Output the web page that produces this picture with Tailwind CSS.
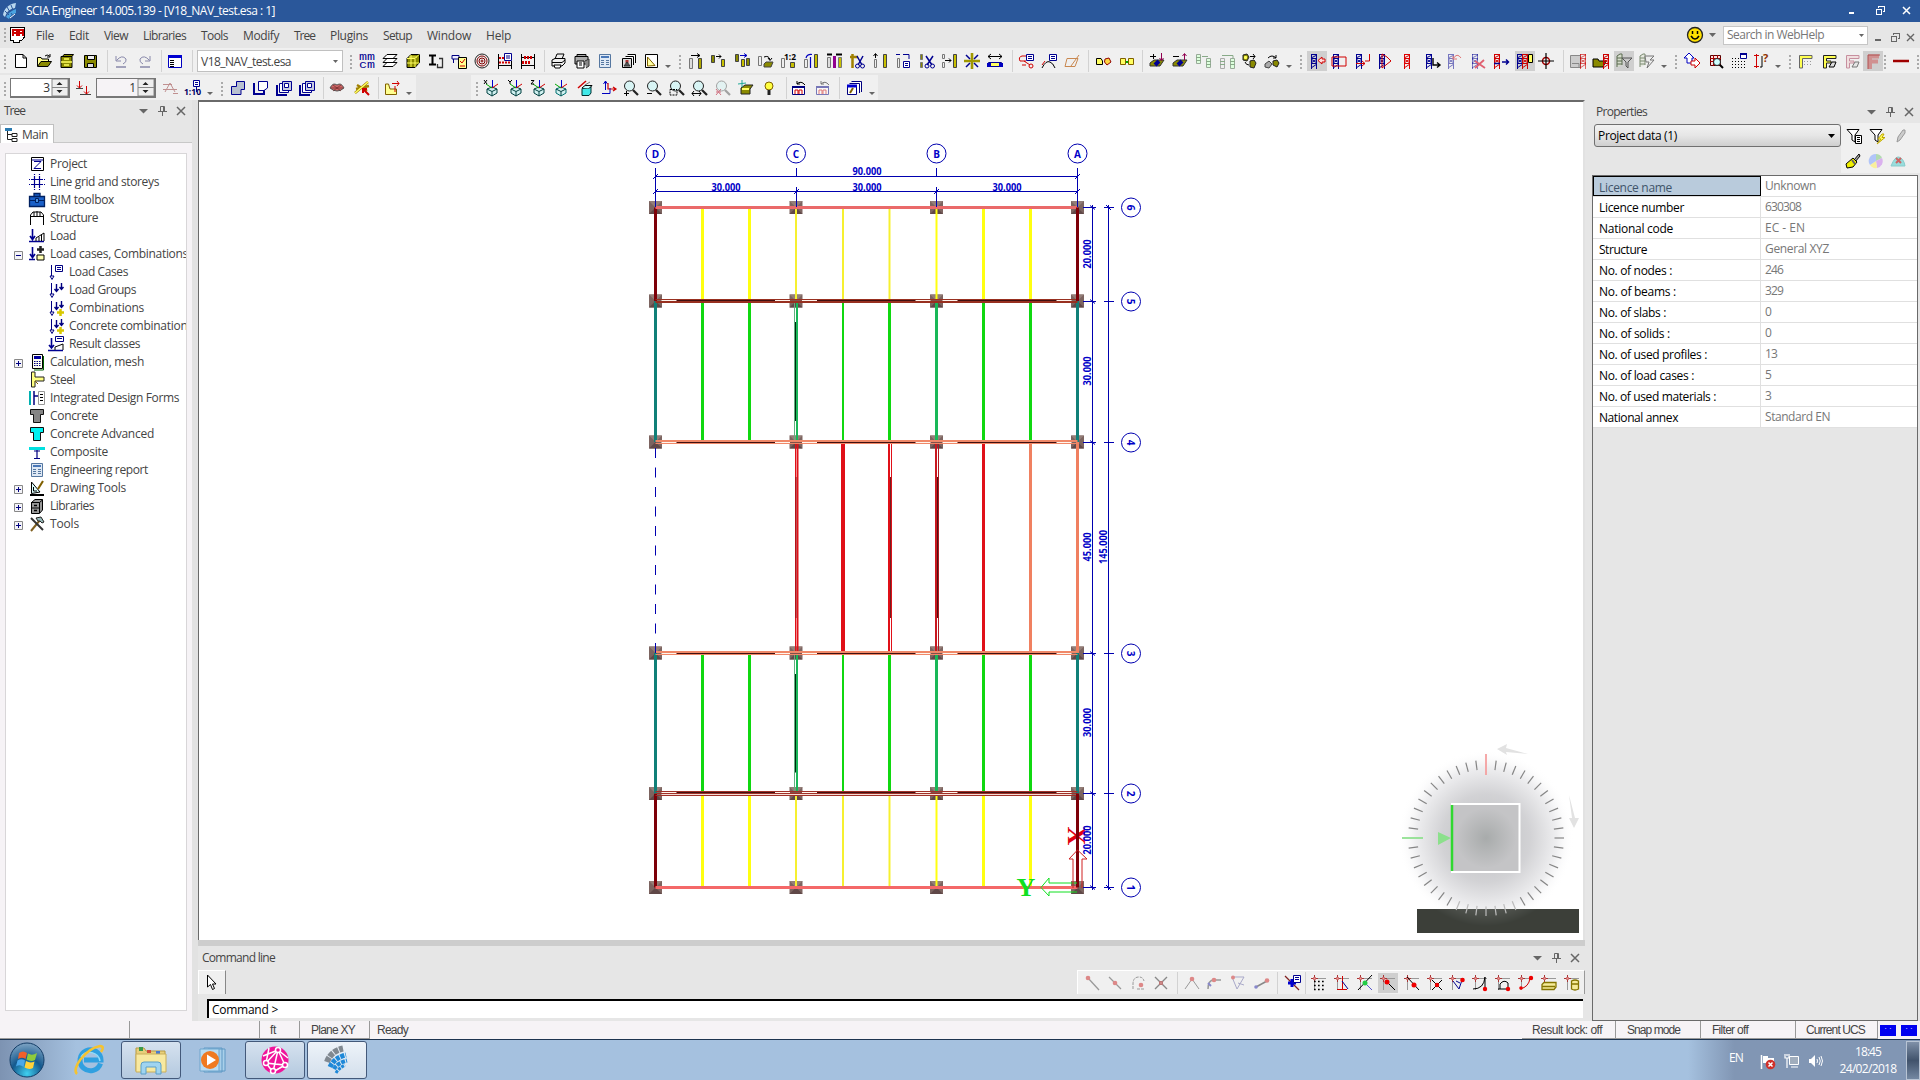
<!DOCTYPE html>
<html lang="en">
<head>
<meta charset="utf-8">
<title>SCIA Engineer</title>
<script src="https://cdn.jsdelivr.net/npm/@tailwindcss/browser@4"></script>
</head>
<body class="w-[1920px] h-[1080px] overflow-hidden bg-[#e6e6e6] font-['Open_Sans','Noto_Sans',sans-serif] text-[12px] leading-[18px] text-[#444] flex flex-col whitespace-nowrap">

<!-- Title bar -->
<header class="h-[22px] shrink-0 bg-[#2a579a] text-white flex items-center pl-[3px] pr-[9px]">
  <svg class="w-[14px] h-[16px] mr-[9px]" viewBox="0 0 14 16"><path d="M0 12C1 6 5 1 13 0L12 5C7 6 4 8 2 14Z" fill="#b9d7ee"/><path d="M3 14C5 10 8 8 13 6V10C9 11 7 13 6 16Z" fill="#4aa3e0"/><path d="M4 4L7 9M8 2L10 7M2 8L6 12M8 10L10 13" stroke="#2a579a"/><path d="M7 15L12 11" stroke="#fff"/></svg>
  <span data-w="249">SCIA Engineer 14.005.139 - [V18_NAV_test.esa : 1]</span>
  <svg class="ml-auto w-[66px] h-[14px]" viewBox="0 0 66 14" fill="none" stroke="#fff" shape-rendering="crispEdges"><path d="M4 9H9" stroke-width="2"/><path d="M33.500 4V2.500H39.500V7.500H38M31.500 5.500H36.500V10.500H31.500Z" stroke-width="1.500"/><path d="M58 3L65 10M65 3L58 10" stroke-width="1.500" shape-rendering="auto"/></svg>
</header>

<!-- Menu -->
<nav class="h-[26px] shrink-0 flex items-center pl-[3px] pr-[4px]">
  <svg class="w-[5px] h-[18px]" viewBox="0 0 5 18"><path d="M2 2V18" stroke="#aaa" stroke-width="2" stroke-dasharray="2 2"/></svg>
  <svg class="w-[16px] h-[16px] ml-[2px] mr-[10px]" viewBox="0 0 16 16" shape-rendering="crispEdges"><path d="M.5.500H14.500V10L12 13H9V15H3V13H.5Z" fill="#fff" stroke="#000"/><path d="M3 9V3H7V9M9 9V3H13V9M3 6H13" fill="none" stroke="#c00" stroke-width="1.500"/></svg>
  <div class="flex gap-[15px] pt-[1px]" id="menu"></div>
  <svg class="ml-auto w-[18px] h-[18px]" viewBox="0 0 18 18"><circle cx="9" cy="9" r="7.500" fill="#ffe000" stroke="#222" stroke-width="1.300"/><path d="M5 10Q9 16 13 10M6.500 5V8M11.500 5V8" fill="none" stroke="#000" stroke-width="1.500"/></svg>
  <svg class="w-[7px] h-[4px] ml-[5px] mr-[7px]" viewBox="0 0 7 4"><path d="M0 0H7L3.500 4Z" fill="#666"/></svg>
  <div class="w-[145px] h-[19px] bg-white border border-[#c6c6c6] flex items-center px-[3px] text-[#777]"><span data-w="97">Search in WebHelp</span><svg class="ml-auto w-[5px] h-[3px]" viewBox="0 0 5 3"><path d="M0 0H5L2.500 3Z" fill="#666"/></svg></div>
  <svg class="w-[44px] h-[14px] ml-[4px] mt-[6px]" viewBox="0 0 44 14" fill="none" stroke="#666" shape-rendering="crispEdges"><path d="M3 9H9" stroke-width="2"/><path d="M21.500 4V2.500H27.500V7.500H26M19.500 5.500H24.500V10.500H19.500Z"/><path d="M35 3L42 10M42 3L35 10" stroke-width="1.400" shape-rendering="auto"/></svg>
</nav>

<!-- Toolbars -->
<div class="h-[25px] shrink-0 bg-[#f0f0f0] flex items-center" id="bar1"></div>
<div class="h-[27px] shrink-0 flex items-end gap-[55px]">
  <div class="h-[25px] w-[416px] bg-[#f0f0f0] flex items-center" id="bar2"></div>
  <div class="h-[25px] w-[407px] bg-[#f0f0f0] flex items-center" id="bar3"></div>
</div>

<!-- Work area -->
<main class="h-[921px] shrink-0 flex">
  <aside class="w-[192px] flex flex-col">
    <div class="h-[24px] flex items-center pl-[4px] pr-[5px] pb-[2px]"><span data-w="21">Tree</span>
      <svg class="ml-auto w-[48px] h-[12px]" viewBox="0 0 48 12"><path d="M0 4H9L4.500 8.500Z" fill="#666"/><path d="M21.500 6.500V1.500H25.500V6.500M19 6.500H28M23.500 6.500V11M24.500 1.500V6" fill="none" stroke="#666"/><path d="M38 2L46 10M46 2L38 10" stroke="#666" stroke-width="1.500"/></svg></div>
    <div class="h-[19px] flex border-b border-[#c8c8c8]"><div class="h-[19px] w-[54px] bg-white border border-b-0 border-[#c0c0c0] flex items-center pl-[4px] pt-[2px]"><svg class="w-[13px] h-[14px] mr-[4px]" viewBox="0 0 13 14"><path d="M0 0H7V3H0Z" fill="#2a7ab0"/><path d="M2.500 3V11.500H7M2.500 6.500H7M7 5.500H12V8.500H7ZM7 10.500H12V13.500H7Z" fill="none" stroke="#222"/></svg><span data-w="26">Main</span></div></div>
    <div class="grow bg-[#f6f3f6] px-[5px] pt-[10px] pb-[10px]"><div class="h-[858px] w-[182px] bg-white border border-[#d8d6d8] overflow-hidden pt-[1px]" id="tree"></div></div>
  </aside>
  <div class="w-[6px] bg-[#e2e2e2]"></div>

  <section class="w-[1387px] flex flex-col">
    <div class="h-[840px] bg-white border-t-2 border-l border-[#6a6a6a] border-r-2 border-r-[#e2e2e2]">
      <svg class="w-[1384px] h-[838px] block" viewBox="199 102 1384 838" id="model"></svg>
    </div>
    <div class="h-[6px] bg-[#cdcdcd]"></div>
    <div class="h-[23px] flex items-center pl-[4px] pr-[4px]"><span data-w="73">Command line</span>
      <svg class="ml-auto w-[48px] h-[12px]" viewBox="0 0 48 12"><path d="M0 4H9L4.500 8.500Z" fill="#666"/><path d="M21.500 6.500V1.500H25.500V6.500M19 6.500H28M23.500 6.500V11M24.500 1.500V6" fill="none" stroke="#666"/><path d="M38 2L46 10M46 2L38 10" stroke="#666" stroke-width="1.500"/></svg></div>
    <div class="h-[25px] flex items-end justify-between">
      <div class="w-[28px] h-[24px] bg-[#f0f0f0] border-t border-l border-t-white border-l-white border-r border-r-[#888] flex items-center justify-center"><svg class="w-[12px] h-[17px]" viewBox="0 0 12 17"><path d="M1.500 1V13L4.500 10.500L6.500 15.500L8.500 14.500L6.500 10H10Z" fill="#fff" stroke="#000"/></svg></div>
      <div class="w-[508px] h-[24px] bg-[#f0f0f0] border-t border-t-white border-l border-l-white border-r border-r-[#999] flex items-center" id="bar4"></div>
    </div>
    <div class="h-[27px] pl-[9px] pt-[5px] pr-[2px]"><div class="h-[19px] bg-white border-t-2 border-l-2 border-black text-black pl-[3px] leading-[17px] flex items-center"><span data-w="66">Command &gt;</span></div></div>
  </section>

  <aside class="w-[335px] pl-[7px] flex flex-col">
    <div class="h-[23px] flex items-center pl-[4px] pr-[5px]"><span data-w="51">Properties</span>
      <svg class="ml-auto w-[48px] h-[12px]" viewBox="0 0 48 12"><path d="M0 4H9L4.500 8.500Z" fill="#666"/><path d="M21.500 6.500V1.500H25.500V6.500M19 6.500H28M23.500 6.500V11M24.500 1.500V6" fill="none" stroke="#666"/><path d="M38 2L46 10M46 2L38 10" stroke="#666" stroke-width="1.500"/></svg></div>
    <div class="h-[52px] flex">
      <div class="w-[247px] h-[23px] ml-[2px] mt-px rounded-[3px] border border-[#707070] bg-linear-to-b from-[#f2f2f2] via-[#e6e6e6] to-[#cfcfcf] text-black flex items-center pl-[3px] pr-[5px]"><span data-w="79">Project data (1)</span><svg class="ml-auto w-[7px] h-[4px]" viewBox="0 0 7 4"><path d="M0 0H7L3.500 4Z"/></svg></div>
      <div class="w-[79px] h-[50px] bg-[#f0f0f0] flex flex-col">
        <div class="h-[25px] flex items-center" id="prop1"></div><div class="h-[25px] flex items-center" id="prop2"></div>
      </div>
    </div>
    <div class="w-[326px] h-[846px] border border-[#6a6a6a] text-black" id="props"></div>
  </aside>
</main>

<!-- Status bar -->
<footer class="h-[19px] shrink-0 bg-[#f6f3f6] flex font-['Liberation_Sans',sans-serif] text-[12px] leading-[19px] border-b border-[#1d3450]">
  <div class="w-[130px] border-r border-b border-[#999]"></div>
  <div class="w-[130px] border-r border-b border-[#999]"></div>
  <div class="w-[40px] border-r border-b border-[#999] pl-[10px]"><span data-w="6">ft</span></div>
  <div class="w-[70px] border-r border-b border-[#999] pl-[11px]"><span data-w="44">Plane XY</span></div>
  <div class="pl-[7px] grow"><span data-w="31">Ready</span></div>
  <div class="w-[94px] border-r border-b border-[#999] pl-[10px]"><span data-w="70">Result lock: off</span></div>
  <div class="w-[85px] border-r border-b border-[#999] pl-[11px]"><span data-w="53">Snap mode</span></div>
  <div class="w-[95px] border-r border-b border-[#999] pl-[11px]"><span data-w="36">Filter off</span></div>
  <div class="w-[82px] border-r border-b border-[#999] pl-[10px]"><span data-w="59">Current UCS</span></div>
  <div class="w-[42px] flex items-center gap-[5px] pl-[2px]"><div class="w-[16px] h-[11px] bg-[#0000f0] text-white text-[8px] leading-[8px] text-center">· ·</div><div class="w-[16px] h-[11px] bg-[#0000f0] text-white text-[8px] leading-[8px] text-center">· ·</div></div>
</footer>

<!-- Taskbar -->
<div class="h-[40px] shrink-0 flex items-center bg-linear-to-r from-[#7d93b2] via-[#a5c1df] via-4% to-[#a5c1df]">
  <svg class="w-[36px] h-[36px] ml-[9px]" viewBox="0 0 36 36"><defs><radialGradient id="orb" cx=".5" cy=".9" r=".9"><stop offset="0" stop-color="#3fd0f0"/><stop offset=".5" stop-color="#14598e"/><stop offset="1" stop-color="#7fa4c4"/></radialGradient></defs><circle cx="18" cy="18" r="17" fill="url(#orb)" stroke="#123c66"/><path d="M10 11Q14 8 18 11L16.500 17Q13 14.500 9 17Z" fill="#f0602a"/><path d="M19 11.500Q23 14 28 11L26 18Q22 20 17.500 17.500Z" fill="#8ecb3c"/><path d="M8.500 18.500Q12.500 16 16 18.500L14.500 25Q11 22 7 24.500Z" fill="#4aa8ea"/><path d="M17 19Q21 21.500 25.500 19.500L24 26Q20 28 15.500 25.500Z" fill="#ffd23a"/></svg>
  <svg class="w-[32px] h-[32px] ml-[28px]" viewBox="0 0 32 32"><path d="M27.500 19.500A10.500 10.500 0 1 1 28 16H11" fill="none" stroke="#30a0e0" stroke-width="5"/><path d="M27 17A10.500 10.500 0 0 0 8 13" fill="none" stroke="#8fdcfa" stroke-width="1.500"/><path d="M4 30C-2 25 12 5 27 2Q32 2 28 8" fill="none" stroke="#f5c330" stroke-width="2.500"/></svg>
  <div class="w-[60px] h-[38px] ml-[16px] rounded-[3px] border border-[#43597a] bg-linear-to-b from-[#d6e2ef] to-[#b4c9df] flex items-center justify-center">
    <svg class="w-[34px] h-[30px]" viewBox="0 0 34 30"><path d="M2 3H10L12 6H31V26H2Z" fill="#e8cf7a" stroke="#b59a45"/><path d="M5 2H9V6H5Z" fill="#3a9a4a"/><path d="M13 5H17V8H13Z" fill="#d04a3a"/><path d="M22 6H26V9H22Z" fill="#4a7ad0"/><path d="M2 9H32V27H2Z" fill="#f8e9a0" stroke="#c9ae5a"/><path d="M7 29V20Q7 17 10 17H24Q27 17 27 20V29H22V22H12V29Z" fill="#9fd4f0" stroke="#5a9fc8"/></svg></div>
  <svg class="w-[28px] h-[26px] ml-[18px]" viewBox="0 0 28 26"><path d="M9 2H26V24H9ZM5 1H23V25H5Z" fill="#a9d0ea" stroke="#5f98c4"/><path d="M1 2H20V24H1Z" fill="#b9dcf2" stroke="#6fa5cc"/><circle cx="11" cy="13" r="9" fill="#f07a20"/><path d="M8 7.500L17 13L8 18.500Z" fill="#fff"/></svg>
  <div class="w-[60px] h-[38px] ml-[18px] rounded-[3px] border border-[#43597a] bg-linear-to-b from-[#d6e2ef] to-[#b4c9df] flex items-center justify-center">
    <svg class="w-[30px] h-[30px]" viewBox="0 0 30 30"><circle cx="15" cy="15" r="13.500" fill="#f0149a"/><path d="M9 3L6 18L25 20L18 5L6 18L13 27L18 5L3 11M25 20L13 27M18 5L28 13" fill="none" stroke="#fff" stroke-width="1.500"/><g fill="#f0149a" stroke="#fff" stroke-width="1.500"><circle cx="18" cy="5" r="2.500"/><circle cx="6" cy="18" r="2.500"/><circle cx="25" cy="20" r="2.500"/><circle cx="13" cy="26" r="2.500"/></g></svg></div>
  <div class="w-[60px] h-[38px] ml-[2px] rounded-[3px] border border-[#43597a] bg-linear-to-b from-[#eef3f9] to-[#d3dfec] flex items-center justify-center">
    <svg class="w-[26px] h-[30px]" viewBox="0 0 26 30" fill="none"><path d="M3 17Q7 6 19 3.500" stroke="#808890" stroke-width="6" stroke-dasharray="5 1"/><path d="M6 22Q10 13 22 10" stroke="#1e88d8" stroke-width="5" stroke-dasharray="4 1"/><path d="M10 24Q13 18 23 15.500" stroke="#1e88d8" stroke-width="4" stroke-dasharray="4 1"/><path d="M12 28Q15 23 21 20" stroke="#1e88d8" stroke-width="3" stroke-dasharray="3 1"/></svg></div>
  <div class="ml-auto w-[232px] h-[40px] flex items-center bg-linear-to-r from-[#a5c1df] via-[#8196b4] via-20% to-[#8196b4] text-white">
    <span class="ml-[41px] mb-[4px]" data-w="14">EN</span>
    <svg class="w-[16px] h-[16px] ml-[17px] mt-[3px]" viewBox="0 0 16 16"><path d="M1.500 1V15" stroke="#fff" stroke-width="1.500"/><path d="M3 2H8V4H14V9H3Z" fill="#fff"/><circle cx="10.500" cy="10.500" r="4.800" fill="#d0302a"/><path d="M8.500 8.500L12.500 12.500M12.500 8.500L8.500 12.500" stroke="#fff" stroke-width="1.500"/></svg>
    <svg class="w-[16px] h-[16px] ml-[8px] mt-[2px]" viewBox="0 0 16 16"><path d="M5.500 3.500H14.500V11.500H5.500Z" fill="#a0adbd" stroke="#fff"/><path d="M7 14H14M1 1V5H5V1M3 1V3M3 5V15" stroke="#fff" fill="none" stroke-width="1.200"/></svg>
    <svg class="w-[16px] h-[14px] ml-[8px] mt-[2px]" viewBox="0 0 16 14"><path d="M1 5H3L7 1V13L3 9H1Z" fill="#fff"/><path d="M9 5Q10 7 9 9M11 3Q13.500 7 11 11M13 2Q16 7 13 12" stroke="#fff" fill="none"/></svg>
    <div class="ml-[15px] w-[58px] text-center leading-[17px]"><div><span data-w="26">18:45</span></div><div><span data-w="57">24/02/2018</span></div></div>
    <div class="ml-auto w-[14px] h-[39px] border border-[#b8c4d4] bg-linear-to-b from-[#7f90a8] via-[#41536c] to-[#7488a2]"></div>
  </div>
</div>

<script>
// path helper: geometry, stroke, fill, stroke width
const P=(d,s='#000',f='none',w=1)=>`<path d="${d}" stroke="${s}" fill="${f}" stroke-width="${w}"/>`;
const box=(x,y,w,h,s,f='none')=>P(`M${x+.5} ${y+.5}h${w-1}v${h-1}h${1-w}Z`,s,f);
const Y='#ffff60',O='#8a8a00',N='#000090',R='#d00000',G='#777',S='#fff';
const bars=(a,b)=>box(1,5,4,11,G,'#ddd')+box(10,5,4,11,'#444',b||'#b0a800')+(a||'');
const tower=(c,x=2)=>P(`M${x+.5} 1V16M${x+5.500} 1V16M${x} 1.500H${x+6}M${x} 5.500H${x+6}M${x} 10.500H${x+6}M${x} 15L${x+6} 11M${x} 6L${x+6} 10M${x} 10L${x+6} 6M${x} 5L${x+6} 2`,c,'none',1);
const lens=(c='#000',x='')=>`<circle cx="6.500" cy="6" r="5" fill="#d8f4f4" stroke="${c}"/>`+P('M10 10L15 15',c,'none',2.200)+x;
const cube=(c,t='')=>P('M3 9L8 7L13 9V13L8 16L3 13Z',c=='x'?'#007070':'#004040','#d0f0f0')+P('M3 9L8 11.500L13 9M8 11.500V16','#004040')+P('M8.500 0V8','#0000d0')+P('M8 8L2 4','#0a0')+P('M8 8L14 4',R)+t;
const cross=P('M3.500 0V7M0 3.500H7','#a33')+box(2,2,3,3,'#c66','#e99')+P('M7 3.500H15M3.500 7V15','#999');
const down=P('M3.500 1V12H6L4 15.500L2 12H3.500','#000080','#fff');
const arr=P('M8.500 2V9M6.500 7L8.500 9.500L10.500 7M13.500 1V7M11.500 5L13.500 7.500L15.500 5','#000080','none',1.400);
const I={
newf:P('M2.500 1.500H10L13.500 5V14.500H2.500ZM10 1.500V5H13.500','#000',S),
open:P('M1.500 13V4.500H5L6 6H12.500V8','#000','#ffff90')+P('M1.500 13.500L5 8.500H15.500L12 13.500Z','#000',O)+P('M9 3Q11 1 13.500 3M14 1V4H11'),
cab:P('M3.500 3.500L5 1.500H14.500L13 3.500ZM2 3.500H13V14.500H2Z','#000',O)+P('M2 9H13M5 6H10M5 12H10',Y,'none',1.500),
save:box(2,2,13,13,'#000',O)+box(5,2,8,5,'#000','#eee')+box(5,10,7,5,'#000','#ddd'),
undo:P('M3 3V8H8M3.500 7.500Q9 1 13 6Q14 9 10 11','#88a')+P('M3 14H13','#88a','none',1.500),
redo:P('M13 3V8H8M12.500 7.500Q7 1 3 6Q2 9 6 11','#88a')+P('M3 14H13','#88a','none',1.500),
win:box(1,2,14,13,'#0000c0',S)+P('M1 3.500H15','#0000d0','none',3)+P('M3 7.500H7M3 9.500H7M3 11.500H7M3 13.500H7'),
mm:'<g font-size="10" font-family="Liberation Mono" fill="#000090"><text x="0" y="7" textLength="16" lengthAdjust="spacingAndGlyphs">mm</text><text x="0" y="15" textLength="16" lengthAdjust="spacingAndGlyphs">cm</text></g>',
layers:P('M1 13.500L5 9.500H15L11 13.500ZM1 9.500L5 5.500H15L11 9.500ZM1 5.500L5 1.500H15L11 5.500Z','#000',S),
gcube:P('M2 5.500L6 1.500H14.500V9.500L10 14.500H2Z','#000',O)+P('M2 5.500H10V14M10 5.500L14 1.500M2 10H14M6 2V14M4 4H12',Y),
ij:P('M1 2.500H8M4.500 2V11M1 11.500H8','#000','none',2)+P('M11 5.500H14.500V14.500H9.500V11','#333','none',1.300),
clip:P('M1 2.500H8V6H1ZM2.500 6V10','#000080','#eef')+box(7,4,9,12,'#000','#ffff90')+P('M9 8L11 10L14 6M9 13H14',R),
rings:'<g fill="none" stroke="#800000"><circle cx="8" cy="8" r="7" stroke="#222"/><circle cx="8" cy="8" r="5"/><circle cx="8" cy="8" r="3" /><circle cx="8" cy="8" r="1"/></g>',
aba:P('M1.500 1V16M14.500 8V16M1 12.500H15')+P('M2 5H8M2 9.500H13',R,'none',2).replace('/>',' stroke-dasharray="2 1"/>')+box(7,0,8,8,N,S)+P('M9 3H13M9 5H13',N),
aba2:P('M1.500 1V16M14.500 1V16M1 12.500H15M2 4.500H14')+P('M4 4.500H13M2 9.500H11',R,'none',3).replace('/>',' stroke-dasharray="2 1"/>'),
prn:P('M4 6L6 1H13L11 6M1 7L4 5.500H14V10L11 13H1ZM1 9.500H11L14 7','#000','#eee')+P('M3 12H10L9 15H4Z','#000',S),
prn2:P('M1 3.500H14V11H1ZM3 3V1.500H12V3','#000','#aaa')+P('M3 8H10V15H3ZM5 10H8M5 12H8','#000',S)+P('M11 8L15 6V13L12 15','#333','#888'),
tbl:box(2,1,12,14,'#5577a0','#dfe9f5')+P('M4 4H12','#4a78b8','none',2)+P('M4 7.500H7M9 7.500H12M4 9.500H7M9 9.500H12M4 11.500H7M9 11.500H12','#5577a0'),
pics:P('M6.500 1.500H14.500V10','#000',S)+P('M4.500 3.500H12.500V12','#000',S)+box(1,5,10,10,'#000','#ddd')+P('M6 7V10','#a33','none',3)+P('M3 13L6 9L9 13Z','#333','#555'),
tri:box(2,1,13,14,'#000',S)+P('M4.500 13V4L12 12.500Z','#806000','#ffffa0'),
b1:bars(P('M3 2.500H12M9 .5L12 2.500L9 4.500')),
b2:box(1,2,4,8,'#444',O)+box(11,6,4,8,'#444','#c8c000')+P('M6 3.500H11M9 1.500L11 3.500L9 5.500'),
b3:box(1,1,4,8,'#444',O)+box(7,6,4,8,'#444','#c8c000')+box(12,5,4,8,'#444',O)+P('M6 2.500H13M10 .5L13 2.500L10 4.500','#0000c0'),
b4:box(1,3,4,10,G,'#eee')+P('M7 11L9 9H16L14 14H7Z','#444',O)+P('M7 4Q12 2 13 7M11 5L13 7.500L15 5'),
b5:box(1,5,4,10,G,'#eee')+box(10,9,5,6,'#444','#c8c000')+'<text x="4" y="7" font-size="8" font-weight="bold" textLength="12" lengthAdjust="spacingAndGlyphs">1:2</text>',
b6:box(1,6,4,9,G,'#eee')+box(11,1,4,14,'#444','#c8c000')+P('M3 5Q4 1 9 1.500M7.500 4V15','#0000c0','none',1.200),
b7:box(1,4,4,11,G,'#ddd')+P('M8.500 3V15','#900090','none',3)+box(12,4,4,11,G,'#c8c000')+P('M1 1.500H6M10 1.500H16','#000','none',2),
sc1:P('M1 4H9M3.500 1V15','#a08000','none',2.500)+P('M8 3L13 12M14 3L9 12',N,'none',1.500)+'<circle cx="8.500" cy="13" r="2" fill="none" stroke="#000090"/><circle cx="13.500" cy="13" r="2" fill="none" stroke="#000090"/>',
b8:box(2,6,3,9,G,'#eee')+box(11,1,4,14,'#444','#c8c000')+P('M3.500 5V1M1.500 3L3.500 .5L5.500 3'),
b9:box(2,5,3,10,G,'#eee')+P('M1 1.500H5M8 1.500H14V6',N)+box(8,8,7,7,N,S)+P('M10 10.500H13M10 12.500H13',N),
sc2:box(1,1,3,6,G,O)+box(1,9,3,6,G,O)+P('M7 3L13 12M14 3L8 12',N,'none',1.500)+'<circle cx="8" cy="13" r="2" fill="none" stroke="#000090"/><circle cx="13.500" cy="13" r="2" fill="none" stroke="#000090"/>',
b10:box(1,1,3,5,G,'#eee')+box(1,9,3,6,G,'#eee')+box(12,1,4,14,'#444','#c8c000')+P('M4 7.500H10M8 5.500L10 7.500L8 9.500'),
star:P('M8 0V16M0 8H16','#a09800','none',2.600)+P('M2 2L6 6M14 2L10 6M2 14L6 10M14 14L10 10',N,'none',1.500),
stretch:P('M1 3.500H15M4 1L1 3.500L4 6M12 1L15 3.500L12 6')+box(1,9,14,5,N,Y)+P('M0 12H4M12 12H16','#0000c0','none',4),
lk1:P('M8 3H4Q0 4 2 8H8M6 8L12 12M4 12H8',R)+box(8,1,8,7,N,S)+P('M10 3.500H14M10 5.500H14',N)+'<circle cx="13" cy="13" r="2" fill="none" stroke="#d00000"/>',
lk2:P('M1 15Q5 7 9 9Q12 10 14 15')+P('M1 12L4 8',R)+box(8,1,8,7,N,S)+P('M10 3.500H14M10 5.500H14',N),
lk3:P('M3 5.500H14L11 13.500H1ZM15 2L7 13','#c98850'),
c1:P('M1.500 5.500H6L7.500 8V11.500H1.500Z','#000',Y)+P('M10 6L14 5L16 9L12 12L9.500 9Z','#900000','#ffd840'),
c2:box(1,5,6,7,'#806000',Y)+box(9,5,6,7,'#806000',Y)+P('M7 9H9','#0a0','none',2),
pl:P('M1 10L5 7H15L11 13H1Z','#333',O)+P('M6 12L10 8',N,'none',4)+P('M1 3.500H7M4.500 1V6')+P('M12.500 0V7M10.500 5L12.500 7.500L14.500 5','#900050'),
mi:P('M1 10L5 7H15L11 13H1Z','#333',O)+P('M6 12L10 8',N,'none',4)+P('M1 3.500H7')+P('M12.500 7V1M10.500 3L12.500 .5L14.500 3','#900050'),
sh1:box(1,1,5,10,'#9a9','#dfd')+box(11,5,5,10,'#9a9','#dfd')+P('M1 4.500H6M1 7.500H6M11 8.500H16M11 11.500H16M7 3.500H13','#8a8'),
sh2:box(1,5,5,11,'#aaa','#eee')+box(11,5,5,11,'#9a9','#dfd')+P('M3 2.500H14V5M1 8.500H6M1 11.500H6M11 8.500H16M11 11.500H16','#8a8'),
cb1:P('M2 2L6 1L8 4L6 8L2 7Z','#222',O)+P('M9 8L13 7L15 10L13 15L9 14Z','#222',O)+P('M9 3.500H14M12 1L14 3.500L12 6M4 9Q5 12 8 12')+box(3,3,3,3,Y,Y),
cb2:P('M1 11L5 8L8 11L5 15L1 14Z','#444','#aaa')+P('M9 8L13 7L15 10L13 14L9 12Z','#222',O)+P('M4 5Q8 1 12 5M12 2V5H9'),
t1:tower(N)+P('M16 6H13V4L9 7.500L13 11V9H16Z',R,'#fdd'),
t2:tower(N)+P('M1 4H15V13H1Z',R),t3:tower(N,1)+P('M1 10.500H10M10 8H14.500V1M7 8L10 10.500L7 13',R),
t4:tower(N,3)+P('M6 1V15L15 8L11 4Z',R),t5:tower('#d00',5),t6:tower(N,2)+P('M9 5V12H16M13 9.500L16 12L13 14.500','#000','none',1.400),
t7:`<g opacity=".5">${tower(N,1)}${P('M6 6Q10 -1 14 5M6 3V6H10',R)}</g>`,t8:`<g opacity=".5">${tower(N,2)}</g>`+P('M5 8L15 15M14 7L5 15','#e06070','none',1.800),
t9:tower('#d00000',1)+P('M1 10.500H7M9 9H15M13 6.500L15.500 9L13 11.500',N,'none',1.500),t10:tower(N,0)+tower('#c00',5)+box(11,1,5,9,'#000',Y),
tgt:'<circle cx="8" cy="8" r="3.500" fill="none" stroke="#a00000" stroke-width="1.500"/>'+P('M8 0V16M0 8H16','#000','none',1.200),
sv:box(0,2,11,13,'#888','#ccc')+P('M2 10.500H9V14','#888')+`<g opacity=".6">${tower('#c00',10)}</g>`,
op2:P('M0 14V6H5L6 8H13L10 14Z','#000',O)+tower('#c00',10),
fl:P('M1 14V3L4 1H6V12M1 5H6M1 8H6M1 11H6','#5a6a50','#d5dccb')+P('M6 5H16L12 9V15L10 13V9Z','#555','#c8c8c8'),
fl2:P('M1 14V3L4 1H6V12M1 5H6M1 8H6M1 11H6','#7a8a70','#e5e8df')+P('M6 3H15L11 7H15L8 15L10 9H7Z','#777','#eee'),
up:P('M3 10V5H0L5 0L10 5H8V10Z','#0000c0',S)+P('M7 8H11V5L16 10L11 15V12H7Z',R,S),
mag:box(2,2,11,11,'#500','#fdd')+P('M2 5.500H13M2 8.500H13M5.500 2V13M9.500 2V13','#a00')+'<circle cx="9" cy="9" r="3.500" fill="#cff" stroke="#222"/>'+P('M12 12L15 15','#000','none',2),
dots:P('M1 5.500H14M1 8.500H14M1 11.500H14M1 14.500H14','#000','none',1).replace('/>',' stroke-dasharray="1 2"/>')+box(9,0,7,6,N,S)+P('M9 1H16',N,'none',2),
q:P('M1 2.500H6M3.500 1V15M1 13.500H6',R)+P('M9 3V14H7','#000')+'<text x="10" y="9" font-size="11" font-weight="bold" fill="#903000">?</text>',
f1:P('M2.500 15V2.500H15V5.500H5.500V15Z','#666','#ffff50')+P('M7 8.500H15M7 11.500H15','#999').replace('/>',' stroke-dasharray="1 2"/>'),
f2:P('M2.500 15V2.500H15V5.500H5.500V8H10V10H5.500V15Z','#222','#ffff50')+P('M8 14L11 9H15L13 14Z','#000','#ddd'),
f3:`<g opacity=".5">${P('M2.500 15V2.500H15V5.500H5.500V8H10V10H5.500V15Z','#a03050','#f0d0d0')+P('M8 14L11 9H15L13 14Z','#000','#ddd')}</g>`,
f4:P('M5 16V3.500H14M5 8.500H13','#d09090','none',4)+P('M3 16V2H15','#b05050'),
ln:P('M0 8H16','#a00000','none',2.500),
s1:P('M4.500 1V8M2 5.500L4.500 8L7 5.500M11.500 6V14M9 11.500L11.500 14L14 11.500',R)+P('M1 8.500H8M5 14.500H16','#444'),
s2:P('M1 4.500H10M3 12L8 3L13 12M1 9.500H15M11 13.500H16','#c09090'),
s3:'<text x="-1" y="15" font-size="9" font-weight="bold" textLength="17" lengthAdjust="spacingAndGlyphs" fill="#000060">1:10</text>'+box(8,0,7,7,N,S)+P('M10 2.500H13M10 4.500H13M11.500 7V12',N),
w1:P('M6.500 1.500H14.500V9.500H11V14.500H1.500V6.500H6.500Z',N,'#b8c0d0'),
w2:P('M1 3V14H11V10',N,'none',2)+P('M5.500 1.500H14.500V8L11 10.500H5.500Z',N,S),
w3:P('M1 5V15H11',N,'none',2)+box(3,3,10,10,N,S)+box(6,1,10,10,N,'#c8cce0')+box(8,3,5,5,N,S),
lips:P('M1 8Q4 2 8 5Q12 2 15 8Q8 14 1 8Z','#555','#c66')+P('M2 8H14M4 5L12 11M12 5L4 11','#622','none',.6),
plane:P('M1 13L14 2M3 5L13 11M2 9L15 6','#a08000','none',2.500)+P('M1 13L14 2',Y,'none',1.500)+P('M9 9L15 15M9 13V9H13',R,'none',2),
fold:P('M1.500 4V14.500H12.500V9H6L4.500 4Z','#806000','#ffff90')+P('M8 3.500H15M13 1L15 3.500L13 6M11 6V12',R),
vx:cube('',P('M0 0L3 4M3 0L0 4')),vy:cube('',P('M0 0L2 2L4 0M2 2V4')),vz:cube('',P('M0 .5H3L0 4H3')),va:cube('x'),
vc:P('M5 8.500H12L14 6.500V13L12 15.500H5Z','#003030','#40e8e8')+P('M5 8L8 5.500H15L12 8.500','#000','#c0ffff')+P('M1 8L9 1',R,'none',1.500)+P('M8 5L13 2',G),
ax:P('M4.500 10V1M2.500 4L4.500 1L6.500 4','#0000c0')+P('M7 3V9H14M12 7L15 9L12 11',R,'none',1.200)+P('M1 13.500H9V8','#0000c0'),
zi:lens('#222',P('M1 13.500H6M3.500 11V16')),zo:lens('#222',P('M1 13.500H6')),zw:lens('#222',P('M1 9.500H8V15H1Z').replace('/>',' stroke-dasharray="2 1"/>')),
za:lens('#222',P('M0 13.500H9M2 11L0 13.500L2 16M7 11L9 13.500L7 16')),zx:`<g opacity=".5">${lens('#555')}</g>`+P('M1 9L6 15M6 9L1 15M1 12H6','#d07080'),
bx:P('M3 8L7 5H15L12 9V14H3Z','#222',O)+P('M4 9H11','#ff6','none',2)+P('M4 0V7M0 4L8 3','#2a9'),
bulb:'<circle cx="8" cy="6" r="4" fill="#ffff40" stroke="#806000"/>'+P('M8 10V15','#222','none',3),
u1:box(1,6,13,9,'#000080',S)+P('M1 7H14','#000080','none',2)+P('M4 14V10H7V14M8 14V10H11V14',R)+P('M6 4Q10 0 14 5M6 1V4H9'),
ck:P('M5.500 1.500H15.500V12','#000080',S)+P('M3.500 3.500H13.500V13','#000080',S)+box(1,5,10,10,'#000080',S)+P('M1 6H11','#0000d0','none',3)+P('M4 13L7 8','#806000','#ff6',2),
n1:P('M3 3L14 15','#999','none',1.300)+'<circle cx="3" cy="3" r="2.300" fill="#d88"/>',
n2:P('M2 2L14 14','#999','none',1.300)+'<circle cx="8" cy="8" r="2.300" fill="#d88"/>',
n3:P('M2 14V9Q2 2 8 2Q12 2 13 6M6 14H14','#999').replace('/>',' stroke-dasharray="3 1"/>')+'<circle cx="10" cy="10" r="2.300" fill="#d88"/>',
n4:P('M2 2L14 14M14 2L2 14','#888','none',1.400)+box(6,6,4,4,'#b77','#c88'),
n5:P('M1 14L8 4L15 14','#999')+'<circle cx="8" cy="4" r="2.300" fill="#d88"/>',
n6:P('M2 14Q2 5 8 5H15','#999','none',1.500)+P('M2 8L5 11','#88c','none',2)+'<circle cx="8" cy="5" r="2.300" fill="#d88"/>',
n7:P('M2 2H14L7 14L2 2M8 8L14 10','#a9a9c9')+'<circle cx="3" cy="2.500" r="2" fill="#d88"/>',
n8:P('M2 12L13 6','#888','none',1.500)+'<circle cx="13" cy="5.500" r="2.300" fill="#d88"/><circle cx="2" cy="12" r="1.800" fill="#88c"/>',
n9:P('M1 1L15 15','#802020','none',1.200)+P('M8 4V12M4 8H12','#0000d0','none',3)+box(9,0,8,8,N,S)+P('M11 2.500H15M11 4.500H15',N),
g1:cross+P('M3 6.500H15M3 10.500H15M3 14.500H15','#000','none',1.700).replace(/\/>/g,' stroke-dasharray="1.700 2.300"/>'),
g2:cross+P('M8.500 1V14M3 14.500H13',R)+P('M8 6L14 14',N),g3:cross+P('M1 15L15 0')+P('M8 8L15 15','#55c')+'<circle cx="8" cy="8" r="2.500" fill="#2c4"/>',
g4:cross+P('M7 7L15 15')+'<circle cx="7" cy="7" r="2.500" fill="#e00"/>',g5:cross+P('M3 2L15 15')+'<circle cx="10" cy="10" r="2.500" fill="#e00"/>',
g6:cross+P('M5 5L15 15M15 5L5 15')+'<circle cx="10" cy="10" r="2.200" fill="#e00"/>',g7:cross+P('M4 6L10 14L13 5M7 6L11 8',N)+'<circle cx="13.500" cy="5" r="2.300" fill="#e00"/>',
g8:cross+P('M1 14Q12 14 13 2V14')+'<circle cx="13" cy="14" r="2.200" fill="#e00"/>',g9:cross+P('M5 14V9Q9 4 13 8V14H3')+'<circle cx="13" cy="14" r="2.200" fill="#e00"/>',
g10:cross+P('M2 14Q11 12 12 3',R)+'<circle cx="13" cy="3" r="2.200" fill="#e00"/><circle cx="3" cy="13" r="1.800" fill="#e00"/>',
g11:cross+P('M1 9.500L3 7.500H15V12L13 14.500H1ZM1 11.500H14','#857500','#f5eb98',1.300),g12:cross+P('M7.500 6Q11 4 14.500 6V14Q11 16 7.500 14ZM7 9H15','#857500','#f5eb98',1.300),
p1:P('M1 1.500H13L9 7V14L6 12V7Z','#000',S)+box(9,7,7,9,'#000',S)+P('M11 9.500H14M11 11.500H14M11 13.500H14'),p2:P('M1 1.500H13L9 7V14L6 12V7Z','#000',S)+P('M13 6L9 11H12L8 16L16 9.500H13L15 6Z','#c0a800',Y),
p3:P('M5 14L6 9L11 2H13V5L8 12Z','#999','#ccc'),p4:P('M9 7L14 1L15 3L10 9','#000','#aaa')+P('M8 5L12 9L8 14L2 15L1 11Z','#000','#f0f000')+P('M7 7L10 11','#666','none',2),
p5:'<g opacity=".6"><path d="M8 8V1A7 7 0 0 1 14 5Z" fill="#8c8"/><path d="M8 8L14 5A7 7 0 0 1 9 15Z" fill="#c8e"/><path d="M8 8L9 15A7 7 0 0 1 2 12Z" fill="#fe6"/><path d="M8 8L2 12A7 7 0 0 1 8 1Z" fill="#8af"/></g>',p6:P('M1 13Q5 3 9 4Q14 6 15 13Z','#8cc','#9dd')+P('M6 5L11 10M11 5L6 10','#c66','none',2),
/* tree */
a1:box(2,1,13,14,'#000',S)+P('M3 4H14M5 12.500L12 5.500H5M5 12.500H12',N),
a2:P('M5.500 0V16M10.500 0V16M0 5.500H16M0 10.500H16',N,'none',1.200).replace('/>',' stroke-dasharray="1 1 12 1 1"/>'),
a3:P('M.5 4.500H15.500V14.500H.5ZM5 4V1.500H11V4','#002060','#1a60c8',1.300)+P('M0 8.500H16','#002060')+box(6,6,4,5,'#002060','#4a90e0'),
a4:P('M1.500 15V5L4 2H12L14.500 5V15M1 6.500H15M5 2V6M8 1V6M11 2V6'),
a5:P('M3.500 1V11M1 8L3.500 11.500L6 8M0 13.500H15',N,'none',1.600)+P('M7 13V10L15 5V13M10 13V9M12.500 13V7','#000'),
a6:P('M3.500 1V11M1 8L3.500 11.500L6 8M0 13.500H6',N,'none',1.600)+P('M11.500 0V7M8 3.500H15','#222','none',2.500)+P('M8 9H15V14H8Z','#000','#ffffb0'),
b_1:down+box(7,1,8,7,'#000080',S)+P('M9 3.500H13M9 5.500H13',N),b_2:down+arr,b_3:down+arr+P('M12.500 9V16M9 12.500H16','#d8c800','none',2.500),
b_4:P('M3.500 2V12M1 9L3.500 12L6 9M0 14.500H15',N,'none',1.600)+box(7,0,9,6,'#000080',S)+P('M9 2.500H14',N)+P('M7 14V11L15 8V14','#000'),
a7:box(3,0,11,15,'#000','#fffff0')+P('M5 3.500H12','#0000a0','none',3)+P('M5 7.500H12M5 9.500H12M5 11.500H12','#000080').replace(/\/>/g,' stroke-dasharray="1.500 1"/>')+P('M14.500 2V16H5','#006000'),
a8:P('M2.500 0V15H6V9H15V5H6V0Z','#222','#ffff80')+P('M6 9L9 12','#806000'),
a9:P('M1 1V15','#00b0b0','none',2)+P('M5 1V15M5 6H9','#000080','none',1.500)+box(9,1,7,14,'#999',S)+P('M11 4.500H14M11 7.500H14M11 10.500H14'),
a10:P('M1.500 1.500H14.500V6.500H11.500V14.500H4.500V6.500H1.500Z','#111','#858585'),a11:P('M1.500 1.500H14.500V6.500H11.500V14.500H4.500V6.500H1.500Z','#111','#00f0f0'),
a12:P('M0 4.500H16','#00e0e0','none',3)+P('M8 6V14M5 14.500H11M5 7H11','#000080','none',1.200),
a13:P('M2.500 2V13.500L11 12ZM4.500 7V11H8','#000','#dff')+P('M1 15H15','#000','none',2)+P('M9 9L14 1','#806000','none',2),
a14:P('M2.500 4.500L6 1.500H13.500V12L10.500 15.500H2.500ZM2 4.500H10.500V15M10.500 4.500L13.500 2M2 10H10','#000','#999')+P('M5 7.500H8M5 12.500H8','#000','none',1.500),
a15:P('M2 15L11 4','#806020','none',2)+P('M7 2L12 1L15 6L13 7L11 5L9 5Z','#222','#9bb')+P('M2 2L14 14','#333','none',2)};
const icon=n=>`<svg class="block w-[20px] h-[20px] overflow-visible" viewBox="-2 -2 20 20">${I[n]}</svg>`;
// items: [centre x, icon name | marker, pressed]; gaps come out as margins inside the flex row
function bar(id,x0,items){
  let x=x0,h='';
  for(const [c,n,on] of items){
    const w={grip:4,sep:1,dd:6,combo:146,spin:60,spin2:60}[n]||20, l=c-w/2, m=`style="margin-left:${l-x}px"`;
    x=l+w;
    if(n=='grip')h+=`<svg ${m} class="shrink-0 w-[4px] h-[16px]" viewBox="0 0 4 16"><path d="M2 2V16" stroke="#aaa" stroke-width="2" stroke-dasharray="2 2"/></svg>`;
    else if(n=='sep')h+=`<div ${m} class="shrink-0 w-px h-[22px] bg-[#d2d2d2]"></div>`;
    else if(n=='dd')h+=`<svg ${m} class="shrink-0 w-[6px] h-[3px] mt-[11px]" viewBox="0 0 6 3"><path d="M0 0H6L3 3Z" fill="#666"/></svg>`;
    else if(n=='combo')h+=`<div ${m} class="shrink-0 w-[146px] h-[22px] bg-white border border-[#c0c0c0] flex items-center pl-[3px] pr-[4px] pt-[2px]"><span data-w="90">V18_NAV_test.esa</span><svg class="ml-auto w-[5px] h-[3px]" viewBox="0 0 5 3"><path d="M0 0H5L2.500 3Z" fill="#666"/></svg></div>`;
    else if(n=='spin'||n=='spin2')h+=`<div ${m} class="shrink-0 w-[60px] h-[20px] ${n=='spin'?'bg-white':'bg-[#f6f3f6]'} border border-[#777] border-r-2 border-b-2 flex text-[#333]"><span class="w-[40px] text-right pr-[1px] leading-[18px]">${n=='spin'?3:1}</span><svg class="w-[17px] h-[17px]" viewBox="0 0 17 17"><path d="M1 0H17V17H1ZM1 8.500H17" fill="#eee" stroke="#888"/><path d="M5.500 6H11.500L8.500 3ZM5.500 11H11.500L8.500 14Z" fill="#222"/></svg></div>`;
    else h+=`<div ${m} class="shrink-0 w-[20px] h-[20px] ${on?'bg-[#cfcfcf]':''}">${icon(n)}</div>`;
  }
  document.getElementById(id).innerHTML=h;
}
bar('bar1',0,[[5,'grip'],[21,'newf'],[44,'open'],[67,'cab'],[90,'save'],[107,'sep'],[121,'undo'],[145,'redo'],[161,'sep'],[175,'win'],[192,'sep'],[270,'combo'],[351,'grip'],[367,'mm'],[390,'layers'],[413,'gcube'],[436,'ij'],[459,'clip'],[482,'rings'],[505,'aba'],[528,'aba2'],[544,'sep'],[559,'prn'],[582,'prn2'],[605,'tbl'],[629,'pics'],[651,'tri'],[668,'dd'],[680,'grip'],[696,'b1'],[718,'b2'],[742,'b3'],[765,'b4'],[788,'b5'],[811,'b6'],[834,'b7'],[857,'sc1'],[880,'b8'],[903,'b9'],[927,'sc2'],[949,'b10'],[972,'star'],[995,'stretch'],[1012,'sep'],[1026,'lk1'],[1049,'lk2'],[1072,'lk3'],[1088,'sep'],[1103,'c1'],[1127,'c2'],[1142,'sep'],[1157,'pl'],[1180,'mi'],[1203,'sh1'],[1227,'sh2'],[1249,'cb1'],[1272,'cb2'],[1289,'dd'],[1301,'grip'],[1317,'t1',1],[1339,'t2'],[1363,'t3'],[1384,'t4'],[1407,'t5'],[1432,'t6'],[1455,'t7'],[1478,'t8'],[1501,'t9'],[1525,'t10',1],[1546,'tgt'],[1563,'sep'],[1578,'sv'],[1601,'op2'],[1624,'fl',1],[1647,'fl2'],[1664,'dd'],[1676,'grip'],[1692,'up'],[1716,'mag'],[1739,'dots'],[1761,'q'],[1778,'dd'],[1790,'grip'],[1805,'f1'],[1829,'f2'],[1852,'f3'],[1873,'f4',1],[1885,'grip'],[1901,'ln'],[1918,'grip']]);
bar('bar2',0,[[5,'grip'],[40,'spin'],[83,'s1'],[126,'spin2'],[170,'s2'],[193,'s3'],[210,'dd'],[222,'grip'],[238,'w1'],[261,'w2'],[284,'w3'],[307,'w3'],[323,'sep'],[337,'lips'],[362,'plane'],[378,'sep'],[392,'fold'],[409,'dd']]);
I.u2=`<g opacity=".5">${I.u1}</g>`;
bar('bar3',471,[[477,'grip'],[492,'vx'],[516,'vy'],[539,'vz'],[561,'va'],[585,'vc'],[609,'ax'],[631,'zi'],[654,'zo'],[677,'zw'],[700,'za'],[723,'zx'],[746,'bx'],[769,'bulb'],[786,'sep'],[799,'u1'],[823,'u2'],[839,'sep'],[854,'ck'],[872,'dd']]);
bar('bar4',1078,[[1093,'n1'],[1115,'n2'],[1139,'n3'],[1161,'n4'],[1177,'sep'],[1192,'n5'],[1214,'n6'],[1238,'n7'],[1262,'n8'],[1277,'sep'],[1292,'n9'],[1305,'sep'],[1319,'g1'],[1342,'g2'],[1365,'g3'],[1388,'g4',1],[1412,'g5'],[1435,'g6'],[1457,'g7'],[1480,'g8'],[1503,'g9'],[1526,'g10'],[1549,'g11'],[1572,'g12']]);
bar('prop1',1841,[[1854,'p1'],[1877,'p2'],[1900,'p3']]);
bar('prop2',1841,[[1853,'p4'],[1876,'p5'],[1898,'p6']]);

menu.innerHTML=[['File',18],['Edit',20],['View',24],['Libraries',43],['Tools',27],['Modify',36],['Tree',21],['Plugins',38],['Setup',29],['Window',44],['Help',25]].map(([t,w])=>`<span data-w="${w}">${t}</span>`).join('');

// level, expander, icon, label, text width
document.getElementById('tree').innerHTML=[[0,'','a1','Project',37],[0,'','a2','Line grid and storeys',109],[0,'','a3','BIM toolbox',64],[0,'','a4','Structure',48],[0,'','a5','Load',26],[0,'-','a6','Load cases, Combinations',138],[1,'','b_1','Load Cases',59],[1,'','b_2','Load Groups',67],[1,'','b_3','Combinations',75],[1,'','b_3','Concrete combinations',124],[1,'','b_4','Result classes',71],[0,'+','a7','Calculation, mesh',94],[0,'','a8','Steel',25],[0,'','a9','Integrated Design Forms',129],[0,'','a10','Concrete',48],[0,'','a11','Concrete Advanced',104],[0,'','a12','Composite',58],[0,'','tbl','Engineering report',98],[0,'+','a13','Drawing Tools',76],[0,'+','a14','Libraries',44],[0,'+','a15','Tools',29]]
.map(([l,e,i,t,w])=>`<div class="h-[18px] flex items-center pl-[8px]"><div class="shrink-0 ${l?'w-[32px]':'w-[13px]'}">${e?`<svg class="w-[9px] h-[9px] mt-[2px]" viewBox="0 0 9 9"><path d="M.5.500H8.500V8.500H.5Z" fill="#f4f4f8" stroke="#888"/><path d="M2 4.500H7${e=='+'?'M4.500 2V7':''}" stroke="#000080"/></svg>`:''}</div><div class="shrink-0 w-[23px]">${icon(i)}</div><span data-w="${w}">${t}</span></div>`).join('');

props.innerHTML=[['Licence name',73,'Unknown',51],['Licence number',85,'630308',36],['National code',74,'EC - EN',40],['Structure',48,'General XYZ',64],['No. of nodes :',73,'246',18],['No. of beams :',77,'329',18],['No. of slabs :',67,'0',6],['No. of solids :',71,'0',6],['No. of used profiles :',108,'13',12],['No. of load cases :',95,'5',6],['No. of used materials :',117,'3',6],['National annex',79,'Standard EN',65]]
.map(([a,w,b,v],i)=>`<div class="h-[21px] flex bg-white border-b border-[#e0e0e0]"><div class="w-[168px] pt-[2px] ${i?'pl-[6px] border-r border-[#e0e0e0]':'bg-[#b9cbdc] border border-black text-[#40546a] pl-[5px]'}"><span data-w="${w}">${a}</span></div><div class="pl-[4px] text-[#777] pt-px"><span data-w="${v}">${b}</span></div></div>`).join('');

/* ---- structural model ---- */
const X=[655.500,702.500,749.500,796,843,889.500,936.500,983.500,1030.500,1077.500], YY=[207.500,301,442,653,793.500,887.500];
const B='#0000b0';let m='';
const V=(i,a,b,c,w)=>m+=P(`M${X[i]} ${a}V${b}`,c,'none',w);
for(const x of [X[0],X[3],X[6],X[9]])for(const y of YY)m+=`<path d="M${x-6.500} ${y-6.500}h13v13h-13Z" fill="#7c6460"/><path d="M${x-6.500} ${y+6.500}h13l-6.500 -6.500Z" fill="#604848"/><path d="M${x-6.500} ${y-6.500}h13l-6.500 6.500Z" fill="#947f78"/>`;
for(const [a,b] of [[0,1],[4,5]]){
  for(const i of [1,2,3,4,5,6,7,8])V(i,YY[a],YY[b],i==3||i==5||i==4?'#f6f030':'#ffff10',i==1||i==2||i>6?3:2);
  V(0,YY[a],YY[b],'#7d0008',3);
}
for(const [a,b] of [[1,2],[3,4]]){
  for(const i of [1,2,4,5,7,8])V(i,YY[a],YY[b],'#10d810',i==4?2:3);
  V(6,YY[a],YY[b],'#18b858',3);V(0,YY[a],YY[b],'#108078',3);V(9,YY[a],YY[b],'#108078',3);
  m+=P(`M${X[3]+1} ${YY[a]}V${YY[b]}`,'#18b858','none',2)+P(`M${X[3]-1.500} ${YY[a]}V${YY[b]}`,'#60b080')+P(`M${X[3]-.5} ${YY[a]+21}V${YY[b]-21}`,'#002810');
}
const [y4,y3]=[YY[2],YY[3]];
m+=P(`M795.500 ${y4}V${y3}`,'#e01018')+P(`M797.500 ${y4}V${y3}`,'#e01018','none',2)+P(`M796 ${y4+35}V${y3-35}`,'#901018');
V(4,y4,y3,'#e01018',4);
m+=P(`M889 ${y4}V${y3}`,'#e01018','none',2)+P(`M891.500 ${y4}V${y3}`,'#e01018')+P(`M890.500 ${y4+35}V${y3-35}`,'#702020');
m+=P(`M935.500 ${y4}V${y3}`,'#c81820')+P(`M938.500 ${y4}V${y3}`,'#b01820')+P(`M936.500 ${y4}V${y3}`,'#c81820')+P(`M937.500 ${y4+35}V${y3-35}`,'#501010');
V(7,y4,y3,'#e01018',3);V(8,y4,y3,'#f08060',3);V(9,y4,y3,'#f08060',3);
// horizontal girders: [row, colour, solid strips as [y, thickness], y of the split line]
m+=P(`M${X[0]} 207.500H${X[9]}`,'#ea6a6a','none',3)+P(`M${X[0]} 887.500H${X[9]}`,'#f46868','none',3);
for(const [c,strips,g] of [['#983020',[[299.5,1],[302,2]],300.5],['#f08868',[[441,2],[443.5,1]],442.5],['#f08868',[[652,2],[654.5,1]],653.5],['#a03028',[[791.5,1],[793.5,1],[795.5,1]],792.5]]){
  for(const [y,w] of strips)m+=P(`M${X[0]} ${y}H${X[9]}`,c,'none',w);
  m+=P(`M${X[0]+6} ${g}H${X[9]-6}`,'#fff4ec');
  if(g==792.5)m+=P(`M${X[0]+6} 794.500H${X[9]-6}`,'#f4dcd4');
  for(const j of [0,3,6])m+=P(`M${X[j]+21} ${g}H${X[j+3]-21}`,'#401010');
  for(const j of [3,6])m+=P(`M${X[j]-6} ${g}H${X[j]+6}`,'#80504a');
}
m+=`<path d="M655.500 448V653" stroke="${B}" stroke-dasharray="10 9.500"/>`;
// grid bubbles and dimensions
const T=(x,y,t,s,len,r,c='#0000c8')=>`<text transform="translate(${x} ${y}) rotate(${r||0})" y="${s*.36}" text-anchor="middle" font-size="${s}" font-weight="700" fill="${c}" ${len?`textLength="${len}" lengthAdjust="spacingAndGlyphs"`:''}>${t}</text>`;
[['D',0],['C',3],['B',6],['A',9]].forEach(([t,i])=>m+=`<circle cx="${X[i]}" cy="153.500" r="9.500" fill="none" stroke="${B}"/>`+T(X[i],154,t,10)+P(`M${Math.floor(X[i])+.5} ${168}V${i%9?176:207}`,B)+P(`M${Math.floor(X[i])+.5} 187V207`,B));
YY.forEach((y,i)=>{const q=Math.floor(y)+.5;m+=`<circle cx="1131" cy="${q}" r="9.500" fill="none" stroke="${B}"/>`+T(1130.500,q,6-i,10,0,90)+P(`M1083 ${q}H1096M1104 ${q}H1114M1090 ${q-2}L1095 ${q+2}`,B)});
m+=P('M655 176.500H1078M655 191.500H1078M1092.500 205V890M1108.500 205V890',B);
m+=P('M653 179L658 174M1075 179L1080 174M653 194L658 189M794 194L799 189M934 194L939 189M1075 194L1080 189M1106 205L1111 210M1106 885L1111 890',B);
const D=(x,y,t,l,r)=>m+=T(x,y,t,10.500,l,r);
D(867,171.500,'90.000',29);D(726,187,'30.000',29);D(867,187,'30.000',29);D(1007,187,'30.000',29);
D(1087.500,254,'20.000',29,-90);D(1087.500,371,'30.000',29,-90);D(1087.500,547,'45.000',29,-90);D(1103,547,'145.000',34,-90);D(1087.500,722.500,'30.000',29,-90);
// axes
m+=`<g font-family="Liberation Serif" font-weight="700" font-size="26" text-anchor="middle"><text x="1026" y="896" fill="#10e020">Y</text><text transform="translate(1068 836) rotate(90)" y="0" fill="#e00010">X</text></g>`;
V(9,YY[0],YY[1],'#7d0008',3);V(9,YY[4],YY[5],'#7d0008',3);
D(1087.500,840,'20.000',29,-90);
m+=P('M1077 883H1049V878L1041 887.500L1049 896V892H1077','#10e020')+P('M1073 888V859H1069L1077.500 850L1087 859H1082V888','#d02020');
// view compass
m+=`<defs><radialGradient id="halo"><stop offset="0" stop-color="#b4b6b8"/><stop offset=".5" stop-color="#cdcdd0"/><stop offset=".8" stop-color="#ececee"/><stop offset="1" stop-color="#fff" stop-opacity="0"/></radialGradient></defs><path d="M1417 909H1579V933H1417Z" fill="#3c3f3a"/><circle cx="1486" cy="838" r="88" fill="url(#halo)" opacity=".9"/><path d="M1417 909H1579V933H1417Z" fill="#3c3f3a" opacity=".85"/>`;
for(let k=0;k<48;k++){if(k==0||k==36)continue;const a=k*7.5*Math.PI/180,s=Math.sin(a),c=-Math.cos(a);m+=P(`M${1486+68.500*s} ${838+68.500*c}L${1486+78*s} ${838+78*c}`,k>20&&k<28?'#bbb':'#858585','none',1.200)}
m+=P('M1486 754V775','#f4a0a0','none',1.800)+P('M1402 838H1423','#90e090','none',1.800)+P('M1452 804H1519.500V872H1452Z','#fff','#c4c4c6',2)+'<defs><radialGradient id="hub"><stop offset="0" stop-color="#a8abab"/><stop offset="1" stop-color="#c4c4c6"/></radialGradient></defs><circle cx="1486" cy="838" r="30" fill="url(#hub)"/>'+P('M1452 805V871','#30d830','none',2.500)+'<path d="M1438 832L1451 838L1438 845Z" fill="#8ce08c"/>';
m+='<path d="M1497 749L1507 744L1506 748L1528 754L1506 752L1507 755ZM1574 828L1579 818L1575 818L1569 795L1572 818L1569 818Z" fill="#e2e2e2"/>';
model.innerHTML=m;

function fit(){
  document.querySelectorAll('[data-w]').forEach(e=>{
    e.style.cssText='display:inline-block;flex-shrink:0;letter-spacing:0';
    const n=e.textContent.length;if(n<2)return;
    e.style.letterSpacing=(e.dataset.w-e.getBoundingClientRect().width)/n+'px';
  });
}
fit();
addEventListener('load',()=>{fit();requestAnimationFrame(fit);setTimeout(fit,60)});
document.fonts.ready.then(fit);
</script>
</body>
</html>
